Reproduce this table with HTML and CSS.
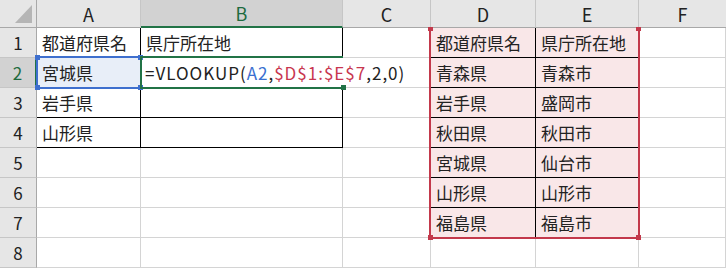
FILE: index.html
```html
<!DOCTYPE html>
<html lang="ja">
<head>
  <meta charset="UTF-8">
  <title>VLOOKUP</title>
  <link rel="stylesheet" href="styles.css">
</head>
<body>
  <div class="sheet">
    <!-- column headers -->
    <div class="hd corner"><span class="tri"></span></div>
    <div class="hd col">A</div>
    <div class="hd col on">B</div>
    <div class="hd col">C</div>
    <div class="hd col">D</div>
    <div class="hd col">E</div>
    <div class="hd col last">F</div>

    <!-- row 1 -->
    <div class="hd row">1</div>
    <div class="c bk">都道府県名</div>
    <div class="c bk">県庁所在地</div>
    <div class="c"></div>
    <div class="c tb">都道府県名</div>
    <div class="c tb">県庁所在地</div>
    <div class="c"></div>

    <!-- row 2 -->
    <div class="hd row on">2</div>
    <div class="c bk ref-a">宮城県</div>
    <div class="c bk edit">=VLOOKUP(<span class="blue">A2</span>,<span class="red">$D$1:$E$7</span>,2,0)<i class="caret"></i></div>
    <div class="c"></div>
    <div class="c tb">青森県</div>
    <div class="c tb">青森市</div>
    <div class="c"></div>

    <!-- row 3 -->
    <div class="hd row">3</div>
    <div class="c bk">岩手県</div>
    <div class="c bk"></div>
    <div class="c"></div>
    <div class="c tb">岩手県</div>
    <div class="c tb">盛岡市</div>
    <div class="c"></div>

    <!-- row 4 -->
    <div class="hd row">4</div>
    <div class="c bk">山形県</div>
    <div class="c bk"></div>
    <div class="c"></div>
    <div class="c tb">秋田県</div>
    <div class="c tb">秋田市</div>
    <div class="c"></div>

    <!-- row 5 -->
    <div class="hd row">5</div>
    <div class="c"></div>
    <div class="c"></div>
    <div class="c"></div>
    <div class="c tb">宮城県</div>
    <div class="c tb">仙台市</div>
    <div class="c"></div>

    <!-- row 6 -->
    <div class="hd row">6</div>
    <div class="c"></div>
    <div class="c"></div>
    <div class="c"></div>
    <div class="c tb">山形県</div>
    <div class="c tb">山形市</div>
    <div class="c"></div>

    <!-- row 7 -->
    <div class="hd row">7</div>
    <div class="c"></div>
    <div class="c"></div>
    <div class="c"></div>
    <div class="c tb">福島県</div>
    <div class="c tb">福島市</div>
    <div class="c"></div>

    <!-- row 8 -->
    <div class="hd row">8</div>
    <div class="c"></div>
    <div class="c"></div>
    <div class="c"></div>
    <div class="c"></div>
    <div class="c"></div>
    <div class="c"></div>

    <!-- range highlights drawn over the grid -->
    <div class="box box-a"><b class="h tl"></b><b class="h tr"></b><b class="h bl"></b><b class="h br"></b></div>
    <div class="box box-d"><b class="h tl"></b><b class="h tr"></b><b class="h bl"></b><b class="h br"></b></div>
    <div class="box box-edit"><b class="h br"></b></div>
  </div>
</body>
</html>
```

FILE: styles.css
```css
* { box-sizing: border-box; }
body { margin: 0; background: #fff; font-family: "Noto Sans CJK JP", "Noto Sans", sans-serif; color: #222; overflow: hidden; }

.sheet {
  position: relative;
  display: grid;
  grid-template-columns: 37px 104px 202px 88px 105px 103px 1fr;
  grid-template-rows: 28px;
  grid-auto-rows: 30px;
  width: 726px;
}

/* headers */
.hd { background: #e6e6e6; color: #222; font-size: 17px; display: flex; align-items: center; justify-content: center; }
.col { border-right: 1px solid #c6c6c6; border-bottom: 1px solid #a8a8a8; font-size: 18px; }
.col.last { border-right: none; }
.row { border-right: 1px solid #a8a8a8; border-bottom: 1px solid #c6c6c6; }
.hd.on { background: #d2d2d2; color: #1e6b40; }
.col.on { border-bottom: 2px solid #217346; }
.row.on { border-right: 2px solid #217346; }
.corner { border-right: 1px solid #a8a8a8; border-bottom: 1px solid #a8a8a8; position: relative; }
.tri { position: absolute; right: 4px; bottom: 4px; width: 0; height: 0; border-left: 17px solid transparent; border-bottom: 18px solid #b5b5b5; }

/* cells */
.c {
  border-right: 1px solid #d4d4d4;
  border-bottom: 1px solid #d4d4d4;
  font-size: 17px;
  padding-left: 5px;
  display: flex;
  align-items: center;
  white-space: nowrap;
}
.c.bk { border-right-color: #000; border-bottom-color: #000; }
.c.tb { border-right-color: #000; border-bottom-color: #000; background: #f9e7e8; }
.ref-a { background: #e8eef8; }
.edit { border-right-color: transparent !important; overflow: visible; position: relative; z-index: 2; letter-spacing: 1px; padding-left: 4px; }
.blue { color: #3a6fd0; }
.red { color: #c8364f; }
.caret { display: inline-block; width: 1px; height: 22px; background: #000; margin-left: 1px; }

/* reference boxes */
.box { position: absolute; pointer-events: none; z-index: 3; }
.box-a { left: 36px; top: 56px; width: 106px; height: 33px; border: 2px solid #3e6fce; }
.box-d { left: 429px; top: 28px; width: 211px; height: 211px; border: 2px solid #c3394b; border-top: none; }
.box-edit { left: 140px; top: 56px; width: 203px; height: 33px; border: 2px solid #217346; border-right: none; }
.h { position: absolute; width: 5px; height: 5px; }
.box-a .h { background: #3e6fce; }
.box-d .h { background: #c3394b; }
.box-edit .h { background: #217346; }
.tl { left: -3px; top: -3px; }
.tr { right: -3px; top: -3px; }
.bl { left: -3px; bottom: -3px; }
.br { right: -3px; bottom: -3px; }
.box-d .tl, .box-d .tr { top: -1px; height: 4px; }
```
